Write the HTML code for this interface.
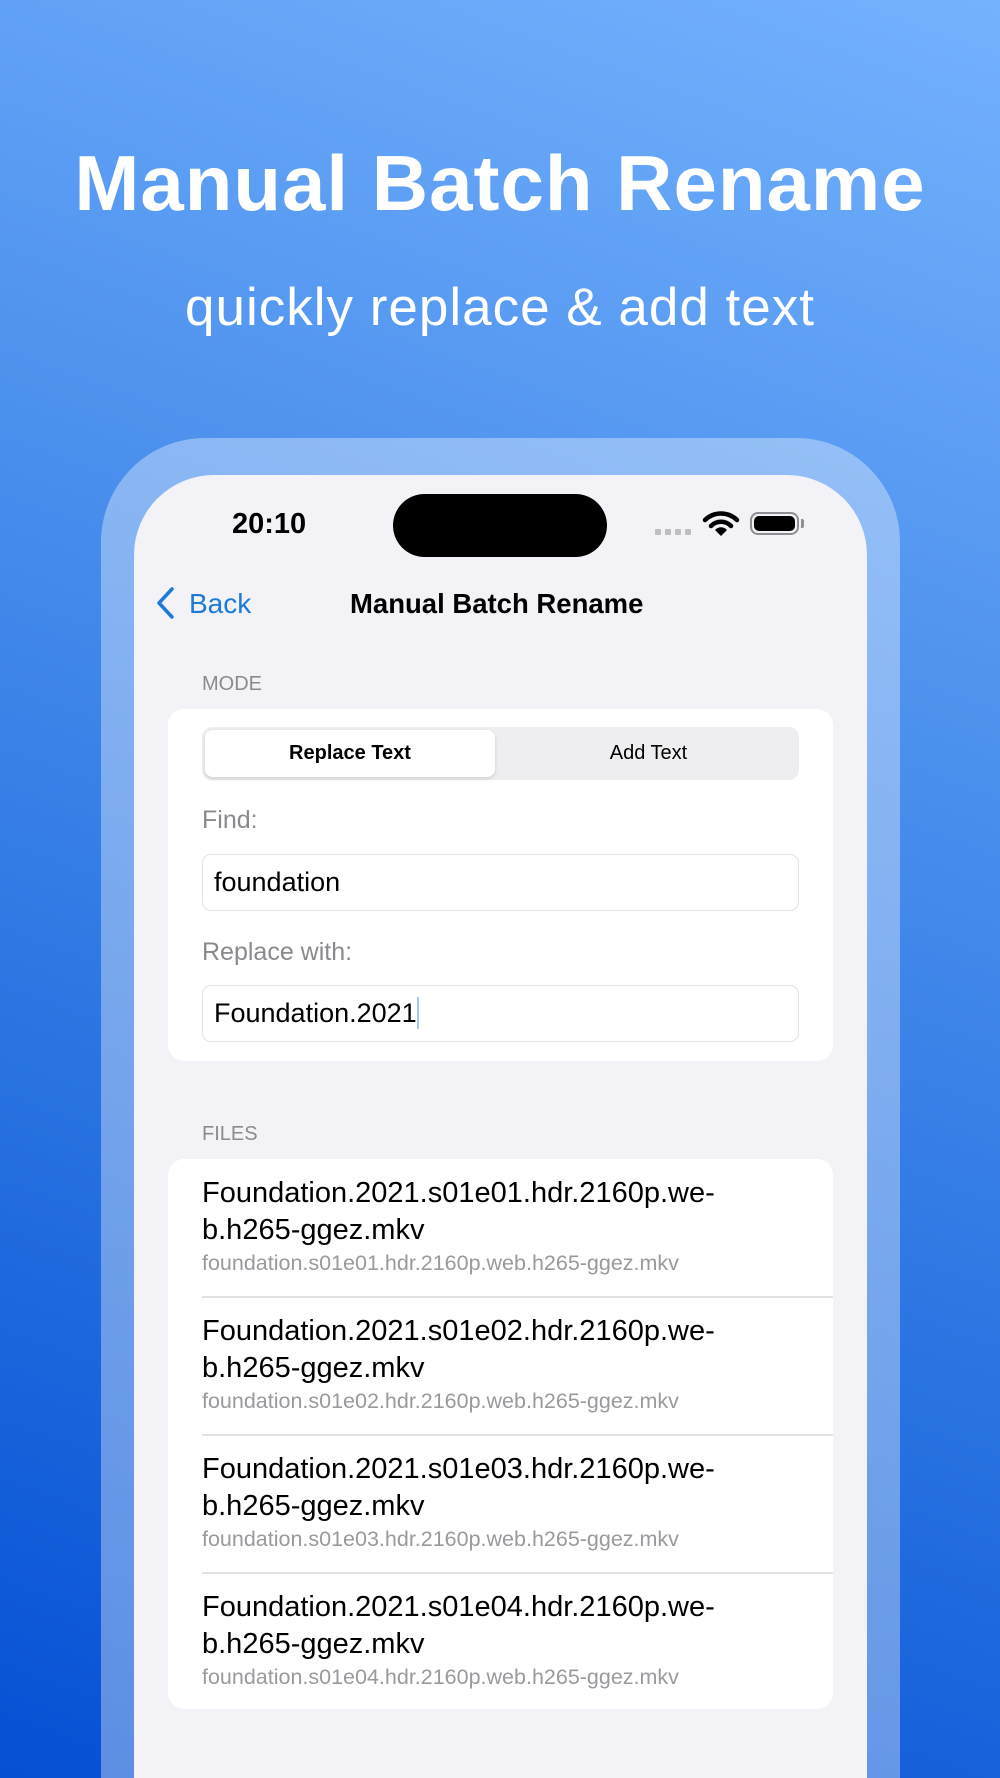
<!DOCTYPE html>
<html><head><meta charset="utf-8"><style>
*{margin:0;padding:0;box-sizing:border-box}
html,body{width:1000px;height:1778px;overflow:hidden;background:#3b80e8}
#wrap{position:absolute;left:0;top:0;width:1000px;height:1778px;overflow:hidden;font-family:"Liberation Sans",sans-serif;background:linear-gradient(200deg,#74b2fd 0%,#4d91ee 35%,#2a74e2 65%,#0550d4 100%)}
.abs{position:absolute}
h1{position:absolute;left:0;width:1000px;top:138px;text-align:center;color:#fff;font-size:78px;font-weight:bold;letter-spacing:1px}
.sub{position:absolute;left:0;width:1000px;top:277px;text-align:center;color:#fff;font-size:53px;letter-spacing:1px}
.frame{left:101px;top:438px;width:799px;height:1340px;border-radius:104px 104px 0 0;background:rgba(255,255,255,0.35)}
.screen{left:134px;top:475px;width:733px;height:1303px;border-radius:80px 80px 0 0;background:#f2f2f7}
.lbl{color:#8a8a8e;font-size:20px}
.card{background:#fff;border-radius:16px}
.field{left:202px;width:597px;height:57px;border:1.5px solid #e3e3e6;border-radius:9px;background:#fff;font-size:27px;padding-left:11px;line-height:54px;color:#000}
.row{position:absolute;left:202px;width:631px;height:138px}
.row .m{position:absolute;top:15px;font-size:29px;line-height:37px;color:#000;white-space:nowrap}
.row .s{position:absolute;top:91px;font-size:21.5px;color:#9a9a9e;white-space:nowrap}
.sep{position:absolute;left:202px;width:631px;height:1.5px;background:#e2e2e6}
</style></head><body><div id="wrap">
<h1>Manual Batch Rename</h1>
<div class="sub">quickly replace &amp; add text</div>
<div class="abs frame"></div>
<div class="abs screen"></div>
<div class="abs" style="left:232px;top:508px;font-size:29px;font-weight:bold;color:#000">20:10</div>
<div class="abs" style="left:393px;top:494px;width:214px;height:63px;border-radius:32px;background:#000"></div>
<div class="abs" style="left:655px;top:529px;width:6px;height:6px;background:#bdbdc2;border-radius:1px;box-shadow:10px 0 #bdbdc2,20px 0 #bdbdc2,30px 0 #bdbdc2"></div>
<svg class="abs" style="left:702px;top:510px" width="38" height="28" viewBox="0 0 38 28"><path d="M3 10 A23 23 0 0 1 35 10" stroke="#000" stroke-width="4.5" fill="none" stroke-linecap="round"/><path d="M9 16 A14 14 0 0 1 29 16" stroke="#000" stroke-width="4.5" fill="none" stroke-linecap="round"/><path d="M19 26 L13 20 A8 8 0 0 1 25 20 Z" fill="#000"/></svg>
<div class="abs" style="left:750px;top:512px;width:49px;height:23px;border:2px solid #8e8e93;border-radius:8px;padding:2px"><div style="width:100%;height:100%;background:#000;border-radius:5px"></div></div>
<div class="abs" style="left:801px;top:519px;width:3px;height:9px;background:#8e8e93;border-radius:0 2px 2px 0"></div>
<svg class="abs" style="left:154px;top:586px" width="22" height="34" viewBox="0 0 22 34"><path d="M18 3 L5 17 L18 31" stroke="#1c7bd9" stroke-width="3.5" fill="none" stroke-linecap="round" stroke-linejoin="round"/></svg>
<div class="abs" style="left:189px;top:588px;font-size:28px;color:#1c7bd9">Back</div>
<div class="abs" style="left:350px;top:588px;font-size:27.5px;font-weight:bold;color:#000">Manual Batch Rename</div>
<div class="abs lbl" style="left:202px;top:673px">MODE</div>
<div class="abs card" style="left:168px;top:709px;width:665px;height:352px"></div>
<div class="abs" style="left:202px;top:727px;width:597px;height:53px;background:#eeeef0;border-radius:10px"></div>
<div class="abs" style="left:205px;top:730px;width:290px;height:47px;background:#fff;border-radius:8px;box-shadow:0 2px 4px rgba(0,0,0,0.12);text-align:center;line-height:47px;font-size:20px;font-weight:bold">Replace Text</div>
<div class="abs" style="left:500px;top:730px;width:297px;height:47px;text-align:center;line-height:47px;font-size:20px">Add Text</div>
<div class="abs" style="left:202px;top:806px;font-size:25px;color:#8a8a8e">Find:</div>
<div class="abs field" style="top:854px">foundation</div>
<div class="abs" style="left:202px;top:938px;font-size:25px;color:#8a8a8e">Replace with:</div>
<div class="abs field" style="top:985px">Foundation.2021<span style="display:inline-block;width:2px;height:32px;background:#a8c8f0;vertical-align:middle;margin-top:-4px"></span></div>
<div class="abs lbl" style="left:202px;top:1123px">FILES</div>
<div class="abs card" style="left:168px;top:1159px;width:665px;height:550px"></div>
<div class="row" style="top:1160px"><div class="m">Foundation.2021.s01e01.hdr.2160p.we-<br>b.h265-ggez.mkv</div><div class="s">foundation.s01e01.hdr.2160p.web.h265-ggez.mkv</div></div>
<div class="sep" style="top:1296px"></div>
<div class="row" style="top:1298px"><div class="m">Foundation.2021.s01e02.hdr.2160p.we-<br>b.h265-ggez.mkv</div><div class="s">foundation.s01e02.hdr.2160p.web.h265-ggez.mkv</div></div>
<div class="sep" style="top:1434px"></div>
<div class="row" style="top:1436px"><div class="m">Foundation.2021.s01e03.hdr.2160p.we-<br>b.h265-ggez.mkv</div><div class="s">foundation.s01e03.hdr.2160p.web.h265-ggez.mkv</div></div>
<div class="sep" style="top:1572px"></div>
<div class="row" style="top:1574px"><div class="m">Foundation.2021.s01e04.hdr.2160p.we-<br>b.h265-ggez.mkv</div><div class="s">foundation.s01e04.hdr.2160p.web.h265-ggez.mkv</div></div>
</div></body></html>
